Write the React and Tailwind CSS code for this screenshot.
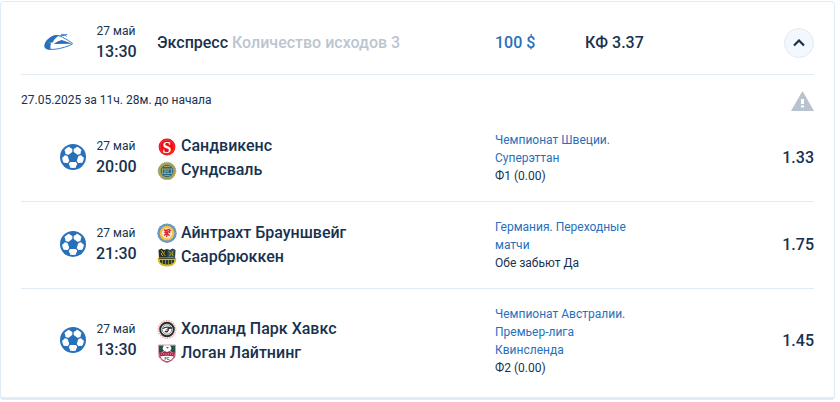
import React, { useState } from 'react';

const SoccerIcon = () => (
  <svg className="w-[26px] h-[26px]" viewBox="0 0 26 26" aria-hidden="true">
    <circle cx="13" cy="13" r="13" fill="#2870bb" />
    <circle cx="13" cy="13" r="10.900" fill="#fff" />
    <path d="M13 7.500l5.500 4-2.100 6.500H9.600L7.500 11.500z" fill="#2870bb" />
    {[0, 72, 144, 216, 288].map((angle) => (
      <g key={angle} transform={`rotate(${angle} 13 13)`}>
        <path d="M13 9V3.500" stroke="#2870bb" strokeWidth="1.300" />
        <path d="M8.800 1.500l.9 2 3.300 1.700 3.300-1.700.9-2z" fill="#2870bb" />
      </g>
    ))}
  </svg>
);

const ExpressIcon = () => (
  <svg className="w-[30px] h-[18px]" viewBox="0 0 30 18" aria-hidden="true">
    <path
      d="M12 2.500C7 3 1.200 8.300.900 12.400c-.2 2.900 1.200 3.500 4.300 3.900 6 .7 14-1.300 20-3.700l3.200-1.600c.4-.4 0-.8-.7-1.200C24 7.200 19 4.200 15.500 2.700c-1-.3-2.400-.3-3.500-.2z"
      fill="#fff"
      stroke="#2870bb"
      strokeWidth="0.9"
    />
    <path d="M12.500 2.200C7 2.500 2.500 6.500 1.100 10.200l7.600-.6c1-2.500 2.600-4.600 6-6.800z" fill="#2870bb" />
    <path d="M1.200 9.800l6 .5c-.8 1.600-1 3.600-.6 6.200-4.200 0-6.400-1.200-6-4z" fill="#2870bb" />
    <path d="M17.800 7l10.600 3.800-18.600.2c2.200-1.800 5-3.200 8-4z" fill="#2870bb" />
    <path d="M15.500 3.200l4.200-1-2.700-1M19 2.200l4.200-.7M19.500 1.200l3 2.200" fill="none" stroke="#2870bb" strokeWidth="0.9" />
  </svg>
);

const WarningIcon = () => (
  <svg className="w-6 h-5 shrink-0" viewBox="0 0 24 20" aria-hidden="true">
    <path d="M12.500 0L24 20H1z" fill="#b9c3cd" />
    <path d="M11 8h3v5h-3zM11 14.500h3v2h-3z" fill="#fff" />
  </svg>
);

const logos = {
  sandvikens: (
    <>
      <circle cx="10" cy="11" r="8.400" fill="#f20d14" />
      <circle cx="10" cy="11" r="7.100" fill="none" stroke="#ff7074" strokeWidth="0.4" />
      <text x="10" y="16.500" textAnchor="middle" fontSize="16" fontWeight="700" fill="#fff" fontFamily="Liberation Serif, serif">S</text>
    </>
  ),
  sundsvall: (
    <>
      <circle cx="10" cy="11" r="8.800" fill="#a79f52" stroke="#8d9563" strokeDasharray="1 1" />
      <circle cx="10" cy="11" r="6.500" fill="#226894" stroke="#b4a850" strokeWidth="0.6" />
      <path d="M5 9h10M5 13.500h10M5.500 9v4.500M8 9v4.500M8 11.200h2M11 9v4.500M14.500 9v4.500M7 6.500h6M7.500 15.500h5" stroke="#b4a850" strokeWidth="0.9" />
    </>
  ),
  braunschweig: (
    <>
      <circle cx="10" cy="10.200" r="9.700" fill="#5c8fbd" />
      <circle cx="10" cy="10.200" r="8.500" fill="none" stroke="#9dbdd6" strokeWidth="0.7" strokeDasharray="1 1" />
      <circle cx="10" cy="10.200" r="7.400" fill="#f6c33d" />
      <circle cx="10" cy="10.200" r="5.200" fill="#f5e7df" />
      <path
        d="M7 7l2 .5L8 9.500l2 .5 0-3 2-.5 1.300 1-1.300 1 1 1.300M7 12.500l2-1.500 2.500.5 1 1.500M10 11.500l-.5 2.500M11 8.500l-.5 3"
        fill="none"
        stroke="#d92a32"
        strokeWidth="1.300"
      />
    </>
  ),
  saarbrucken: (
    <>
      <path d="M1.500 3l3-1.500L7 3 10 2l3 1 2.500-1.500 3 1.500-.5 8H2z" fill="#2b2e21" />
      <path d="M10.500 2.500l2.500 1L15.500 2l2.300 1-.5 8h-6.800z" fill="#2c5265" />
      <path d="M4 3.500l2 1.500-2 2 2 2M7.500 4.500l-1 2.500 2 2M12 4.500l2 2-1.500 2.500M16 4l-1 2.500 1 2.500" fill="none" stroke="#b9a82c" strokeWidth="1" />
      <path d="M.8 10.500h18.400V13c-.8 4.500-4.200 6.500-9.200 6.500S1.600 17.500.8 13z" fill="#d4bd22" />
      <path d="M3 13h14v2c-1.300 1.700-4 2.500-7 2.500s-5.700-.8-7-2.500z" fill="#25372e" />
      <path d="M5.500 13v5M8.500 13v5M11.500 13v5M14.500 13v5" stroke="#a39b2d" strokeWidth="0.8" />
      <path d="M2 11.500h16" stroke="#292d22" strokeWidth="0.8" />
    </>
  ),
  holland: (
    <>
      <circle cx="10" cy="10.500" r="8.800" fill="#fff" stroke="#f1aaa8" strokeWidth="1.400" strokeDasharray="1.500 1" />
      <circle cx="10" cy="10.500" r="6.800" fill="#fff" stroke="#292b2d" strokeWidth="2" />
      <circle cx="10" cy="10.500" r="4.700" fill="#fff" stroke="#55585a" strokeWidth="0.7" />
      <path d="M6 9.500c2-1.500 5-1.700 8-.6l-3 1c1 2-1.500 4-3 2" fill="none" stroke="#303234" strokeWidth="1.400" />
      <path d="M8.500 10.500l3-.5-1.200 2z" fill="#c94b4c" />
    </>
  ),
  logan: (
    <>
      <path d="M1.500 2h17v8.500c0 4.500-3 7.500-8.500 9C4.500 18 1.500 15 1.500 10.500z" fill="#fff" stroke="#b17e8c" strokeWidth="0.7" />
      <path d="M2 2.500h4.800l-1.300 3L7 8l-2.500 1.500H2zM18 2.500h-4.800l1.300 3L13 8l2.500 1.500H18z" fill="#245246" />
      <path d="M9 4h2l.8 1-1.300.5z" fill="#a72950" />
      <path d="M2 9l3.500.5L7.500 8l2.500 1 2.500-1 2 1.500L18 9l-.5 4.500c-5-1-10-1-15 0z" fill="#a72950" />
      <path d="M4.500 10.500v1.500M6.700 10v2M9 10v2M11.300 10v2M13.500 10v2M15.500 10.500v1.500" stroke="#e2a7b7" strokeWidth="0.6" />
      <path d="M2.500 13c1 3 3.800 4.900 7.500 5.900 3.700-1 6.500-2.900 7.500-5.900" fill="none" stroke="#a72950" strokeWidth="1" />
      <text x="10" y="17" textAnchor="middle" fontSize="4" fontWeight="700" fill="#245246">FC</text>
    </>
  ),
};

const events = [
  {
    id: 1,
    time: '20:00',
    teams: [
      { name: 'Сандвикенс', logo: 'sandvikens' },
      { name: 'Сундсваль', logo: 'sundsvall' },
    ],
    league: 'Чемпионат Швеции. Суперэттан',
    outcome: 'Ф1 (0.00)',
    odds: '1.33',
  },
  {
    id: 2,
    time: '21:30',
    teams: [
      { name: 'Айнтрахт Брауншвейг', logo: 'braunschweig' },
      { name: 'Саарбрюккен', logo: 'saarbrucken' },
    ],
    league: 'Германия. Переходные матчи',
    outcome: 'Обе забьют Да',
    odds: '1.75',
  },
  {
    id: 3,
    time: '13:30',
    teams: [
      { name: 'Холланд Парк Хавкс', logo: 'holland' },
      { name: 'Логан Лайтнинг', logo: 'logan' },
    ],
    league: 'Чемпионат Австралии. Премьер-лига Квинсленда',
    outcome: 'Ф2 (0.00)',
    odds: '1.45',
  },
];

const DateTime = ({ time }) => (
  <div className="w-[61px] shrink-0">
    <div className="w-10 text-center text-xs leading-[18px] whitespace-nowrap">27 май</div>
    <div className="w-10 text-center font-medium leading-6">{time}</div>
  </div>
);

const EventRow = ({ event }) => (
  <li className="flex items-center py-4 border-b border-[#e0ecf3] last:border-b-0">
    <div className="w-[75px] shrink-0 flex justify-end pr-[10px] pb-0.5">
      <SoccerIcon />
    </div>
    <DateTime time={event.time} />
    <div className="flex-1 min-w-0">
      {event.teams.map((team) => (
        <div key={team.name} className="flex items-center gap-1 font-medium leading-6">
          <svg className="w-5 h-5 shrink-0" viewBox="0 0 20 20" aria-hidden="true">
            {logos[team.logo]}
          </svg>
          <span>{team.name}</span>
        </div>
      ))}
    </div>
    <div className="w-[319px] shrink-0 flex items-center justify-between">
      <div className="w-[140px] text-xs leading-[18px]">
        <a href="#league" className="block text-[#2870bb]">{event.league}</a>
        <div>{event.outcome}</div>
      </div>
      <div className="font-medium leading-6">{event.odds}</div>
    </div>
  </li>
);

export default function App() {
  const [open, setOpen] = useState(true);

  return (
    <div className="pt-px pr-[5px] bg-white font-['Roboto',sans-serif] text-base text-[#17324f]">
      <section className="border border-b-3 border-[#e0ecf3] rounded-[4px] px-5 pb-1">
        <header className="flex items-center pt-5 pb-2.5 border-b border-[#e0ecf3]">
          <div className="w-[75px] shrink-0 flex justify-end pr-[22px] pb-0.5">
            <ExpressIcon />
          </div>
          <DateTime time="13:30" />
          <h2 className="flex-1 min-w-0 font-medium leading-6">
            Экспресс <span className="text-[#bcc5cf]">Количество исходов 3</span>
          </h2>
          <div className="w-[319px] shrink-0 flex items-center font-medium leading-6">
            <div className="w-[90px] text-[#2870bb]">100 $</div>
            <div className="flex-1">КФ 3.37</div>
            <button
              type="button"
              aria-label="Показать исходы"
              aria-expanded={open}
              onClick={() => setOpen(!open)}
              className="w-[30px] h-[30px] rounded-full border border-[#e0ecf3] bg-[#f3f7fe] flex items-center justify-center"
            >
              <svg className={open ? 'w-3 h-2' : 'w-3 h-2 rotate-180'} viewBox="0 0 12 8" aria-hidden="true">
                <path d="M1 6.500l5-5 5 5" fill="none" stroke="#17324f" strokeWidth="2.200" />
              </svg>
            </button>
          </div>
        </header>

        {open && (
          <>
            <div className="flex items-start justify-between pt-4 pb-1">
              <p className="text-xs leading-[18px]">27.05.2025 за 11ч. 28м. до начала</p>
              <WarningIcon />
            </div>
            <ul>
              {events.map((event) => (
                <EventRow key={event.id} event={event} />
              ))}
            </ul>
          </>
        )}
      </section>
    </div>
  );
}
